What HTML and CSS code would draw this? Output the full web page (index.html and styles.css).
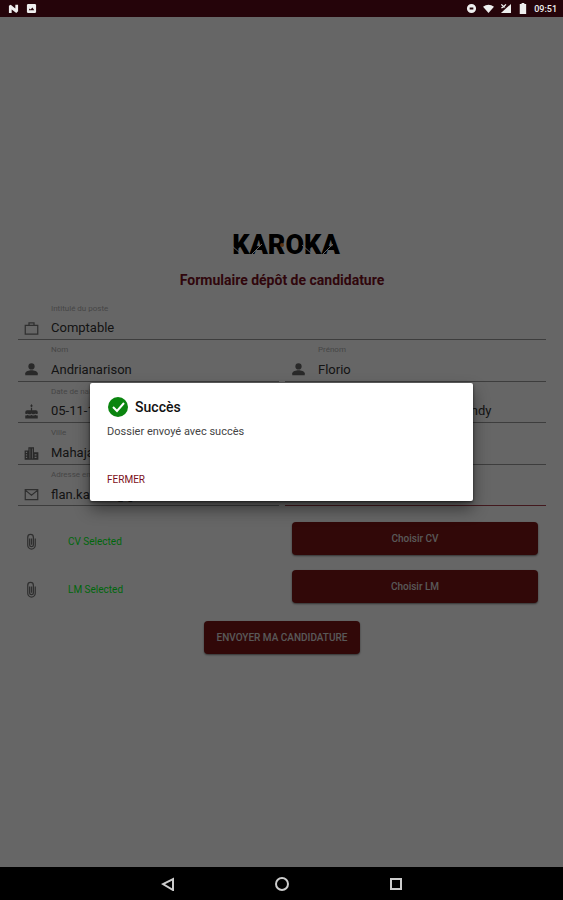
FILE: index.html
```html
<!DOCTYPE html>
<html lang="fr">
<head>
  <meta charset="UTF-8">
  <meta name="viewport" content="width=device-width, initial-scale=1">
  <title>Karoka - Formulaire dépôt de candidature</title>
  <link rel="stylesheet" href="styles.css">
</head>
<body>

  <!-- Barre de statut -->
  <header class="status-bar">
    <svg class="status-icon" viewBox="0 0 12 12"><path d="M1 11V3l2-1 5 4V2h3v7l-2 2-5-4v4z"/></svg>
    <svg class="status-icon gap" viewBox="0 0 12 12"><path fill-rule="evenodd" d="M2 1h8l1 1v8l-1 1H2l-1-1V2zM3 8h6L7 5 5 7 4 6z"/></svg>
    <span class="spacer"></span>
    <svg class="status-icon" viewBox="0 0 12 12"><path fill-rule="evenodd" d="M6 1a5 5 0 1 1 0 10A5 5 0 0 1 6 1zM4 5v2h4V5z"/></svg>
    <svg class="status-icon" viewBox="0 0 12 12"><path d="M0 4q6-4 12 0L6 11z"/></svg>
    <svg class="status-icon" viewBox="0 0 12 12"><path d="M12 1v10H1zM1 2l1-1 2 2 2-2 1 1-2 2 1 1H5L4 5 2 6 1 5l2-1z"/></svg>
    <svg class="status-icon" viewBox="0 0 12 12"><path d="M5 0h3v1h2v11H3V1h2z"/></svg>
    <time class="clock">09:51</time>
  </header>

  <main class="screen">
    <form class="form">
      <svg class="logo" viewBox="0 0 116 30" role="img" aria-label="Karoka">
        <text x="58" y="25" text-anchor="middle" class="logo-text">KAROKA</text>
        <path class="logo-cut" d="M3 16l10 9M24 25l10-10M74 16l10 9M95 25l10-10"/>
        <path class="logo-corner" d="M58 4h5l-5 6zM75 4h-5l5 6zM58 27h5l-5-6zM75 27h-5l5-6z"/>
        <circle class="logo-dot" cx="54" cy="16" r="2"/>
      </svg>

      <h1>Formulaire dépôt de candidature</h1>

      <div class="fields">
        <div class="field wide">
          <label for="poste">Intitulé du poste</label>
          <svg class="icon line" viewBox="0 0 24 24"><path d="M2 7h20v14H2zM8 7V3h8v4"/></svg>
          <input type="text" id="poste" value="Comptable">
        </div>
        <div class="field">
          <label for="nom">Nom</label>
          <svg class="icon" viewBox="0 0 24 24"><circle cx="12" cy="7" r="5"/><path d="M2 21v-3c0-3 6-5 10-5s10 2 10 5v3z"/></svg>
          <input type="text" id="nom" value="Andrianarison">
        </div>
        <div class="field">
          <label for="prenom">Prénom</label>
          <svg class="icon" viewBox="0 0 24 24"><circle cx="12" cy="7" r="5"/><path d="M2 21v-3c0-3 6-5 10-5s10 2 10 5v3z"/></svg>
          <input type="text" id="prenom" value="Florio">
        </div>
        <div class="field">
          <label for="naissance">Date de naissance</label>
          <svg class="icon" viewBox="0 0 24 24"><path d="M11 6h2v4h6q3 0 3 3v2q-2 2-4 0-3 3-6 0-3 3-6 0-2 2-4 0v-2q0-3 3-3h6zM2 18q2 1 4-1 3 3 6 0 3 3 6 0 2 2 4 1v5H2zM12 0l2 3-2 2-2-2z"/></svg>
          <input type="text" id="naissance" value="05-11-1990">
        </div>
        <div class="field">
          <label for="adresse">Adresse</label>
          <svg class="icon line" viewBox="0 0 24 24"><path d="M3 11l9-8 9 8v10H3z"/></svg>
          <input type="text" id="adresse" value="Lot 12 Antanimalaza Ambindy">
        </div>
        <div class="field">
          <label for="ville">Ville</label>
          <svg class="icon" viewBox="0 0 24 24"><path fill-rule="evenodd" d="M1 7h6V2h9v8h7v12H1zM3 9v2h2V9zm0 4v2h2v-2zm0 4v2h2v-2zM9 4v16h1V4zm4 0v16h1V4zm4 9v2h3v-2zm0 4v2h3v-2z"/></svg>
          <input type="text" id="ville" value="Mahajanga">
        </div>
        <div class="field">
          <label for="pays">Pays</label>
          <svg class="icon line" viewBox="0 0 24 24"><path d="M5 22V3h14l-4 5 4 5H5"/></svg>
          <input type="text" id="pays" value="Madagascar">
        </div>
        <div class="field">
          <label for="email">Adresse email</label>
          <svg class="icon line" viewBox="0 0 24 24"><path d="M2 4h20v16H2zM2 5l10 8 10-8"/></svg>
          <input type="text" id="email" value="flan.karoka@gmail.com">
        </div>
        <div class="field active">
          <label for="tel">Téléphone</label>
          <svg class="icon line" viewBox="0 0 24 24"><path d="M7 2h10v18H7zM11 17h2"/></svg>
          <input type="text" id="tel" value="034 00 000 00">
        </div>
      </div>

      <div class="files">
        <div class="file">
          <svg class="icon line" viewBox="0 0 24 24"><path d="M9 7v10a3 3 0 0 0 6 0V5a4 4 0 0 0-9 0v13a6 6 0 0 0 12 0V7M12 7v10"/></svg>
          <span class="file-name">CV Selected</span>
          <button type="button">Choisir CV</button>
        </div>
        <div class="file">
          <svg class="icon line" viewBox="0 0 24 24"><path d="M9 7v10a3 3 0 0 0 6 0V5a4 4 0 0 0-9 0v13a6 6 0 0 0 12 0V7M12 7v10"/></svg>
          <span class="file-name">LM Selected</span>
          <button type="button">Choisir LM</button>
        </div>
      </div>

      <button type="submit" class="send">ENVOYER MA CANDIDATURE</button>
    </form>

    <!-- Message de confirmation -->
    <div class="overlay">
      <div class="dialog" role="dialog" aria-labelledby="dialogTitle">
        <div class="dialog-head">
          <svg class="check" viewBox="0 0 20 20"><circle cx="10" cy="10" r="10"/><path d="M5 10l4 4 7-8"/></svg>
          <h2 id="dialogTitle">Succès</h2>
        </div>
        <p>Dossier envoyé avec succès</p>
        <button type="button" class="close">FERMER</button>
      </div>
    </div>
  </main>

  <!-- Navigation Android -->
  <nav class="nav-bar">
    <button type="button" aria-label="Retour"><svg viewBox="0 0 14 14"><path d="M12 2v11L2 7z"/></svg></button>
    <button type="button" aria-label="Accueil"><svg viewBox="0 0 14 14"><circle cx="7" cy="7" r="6"/></svg></button>
    <button type="button" aria-label="Applications"><svg viewBox="0 0 14 14"><path d="M2 2h10v10H2z"/></svg></button>
  </nav>

</body>
</html>
```

FILE: styles.css
```css
* {
  box-sizing: border-box;
}

body {
  margin: 0;
  min-height: 100vh;
  display: flex;
  flex-direction: column;
  font-family: Roboto, "Liberation Sans", sans-serif;
  background: #fff;
  color: #333;
}

h1, h2, p {
  margin: 0;
}

button {
  font-family: inherit;
  border: none;
  cursor: pointer;
}

.status-bar {
  height: 17px;
  display: flex;
  align-items: center;
  gap: 6px;
  padding: 0 6px 0 8px;
  background: #25040a;
  color: #eee;
}

.status-icon {
  width: 11px;
  height: 11px;
  fill: #eee;
}

.status-icon.gap {
  margin-left: 1px;
}

.spacer {
  flex: 1;
}

.clock {
  font-size: 9px;
  font-weight: 500;
}

.screen {
  flex: 1;
  position: relative;
  display: flex;
  flex-direction: column;
  justify-content: center;
}

.form {
  display: flex;
  flex-direction: column;
  align-items: center;
  padding: 0 17px 2px 18px;
}

.logo {
  width: 116px;
  height: 30px;
  margin-left: 8px;
}

.logo-text {
  font-size: 27px;
  font-weight: 900;
  fill: #000;
}

.logo-cut {
  fill: none;
  stroke: #fff;
  stroke-width: 1;
}

.logo-corner {
  fill: #fff;
}

.logo-dot {
  fill: #e08030;
}

h1 {
  margin: 11px 0 9px;
  font-size: 14px;
  line-height: 20px;
  font-weight: 700;
  color: #780f1e;
}

.fields {
  width: 100%;
  min-height: 208px;
  display: grid;
  grid-template-columns: 1fr 1fr;
  grid-auto-rows: 1fr;
  column-gap: 6px;
}

.field {
  display: grid;
  grid-template-columns: 33px 1fr;
  grid-template-rows: 12px 1fr;
  align-items: center;
  padding-top: 4px;
  border-bottom: 1px solid #999;
}

.field.wide {
  grid-column: 1 / -1;
}

.field.active {
  border-bottom-color: #a8404c;
}

.field label {
  grid-column: 2;
  font-size: 8px;
  line-height: 12px;
  color: #b0b0b0;
}

.field input {
  width: 100%;
  padding: 3px 0 0;
  border: none;
  outline: none;
  background: none;
  font-family: inherit;
  font-size: 13px;
  line-height: 20px;
  color: #333;
}

.icon {
  width: 15px;
  height: 15px;
  margin: 3px 0 0 6px;
  fill: #666;
}

.icon.line {
  fill: none;
  stroke: #777;
  stroke-width: 2;
}

.files {
  width: 100%;
  display: grid;
  gap: 15px;
  padding: 15px 8px 0 0;
}

.file {
  display: grid;
  grid-template-columns: 50px 1fr 246px;
  align-items: center;
}

.file .icon {
  width: 15px;
  height: 17px;
  margin-top: 6px;
}

.file-name {
  padding-top: 6px;
  font-size: 10px;
  color: #00ff1e;
}

.file button,
.send {
  height: 33px;
  border-radius: 4px;
  background: #7c1414;
  color: #ddd;
  font-size: 10px;
  font-weight: 500;
  box-shadow: 0 1px 2px rgba(0, 0, 0, 0.5);
}

.send {
  margin-top: 18px;
  padding: 0 13px;
}

.overlay {
  position: absolute;
  inset: 0;
  display: flex;
  align-items: center;
  justify-content: center;
  background: rgba(0, 0, 0, 0.6);
}

.dialog {
  width: 68%;
  padding: 14px 17px 12px;
  background: #fff;
  border-radius: 2px;
  box-shadow: 0 8px 16px rgba(0, 0, 0, 0.45), 0 1px 3px rgba(0, 0, 0, 0.6);
}

.dialog-head {
  display: flex;
  align-items: center;
  gap: 7px;
}

.dialog h2 {
  font-size: 14px;
  line-height: 20px;
  font-weight: 500;
  color: #111;
}

.dialog p {
  margin: 6px 0 30px;
  font-size: 11px;
  line-height: 18px;
  color: #444;
}

.check {
  width: 20px;
  height: 20px;
  margin-left: 1px;
  fill: #0a850f;
}

.check path {
  fill: none;
  stroke: #fff;
  stroke-width: 2;
}

.close {
  display: block;
  padding: 0;
  background: none;
  color: #7c1020;
  font-size: 10px;
  line-height: 18px;
  font-weight: 400;
}

.nav-bar {
  height: 33px;
  display: flex;
  justify-content: center;
  align-items: center;
  gap: 100px;
  background: #000;
}

.nav-bar button {
  padding: 0;
  background: none;
}

.nav-bar svg {
  display: block;
  width: 14px;
  height: 14px;
  fill: none;
  stroke: #ccc;
  stroke-width: 2;
}
```
